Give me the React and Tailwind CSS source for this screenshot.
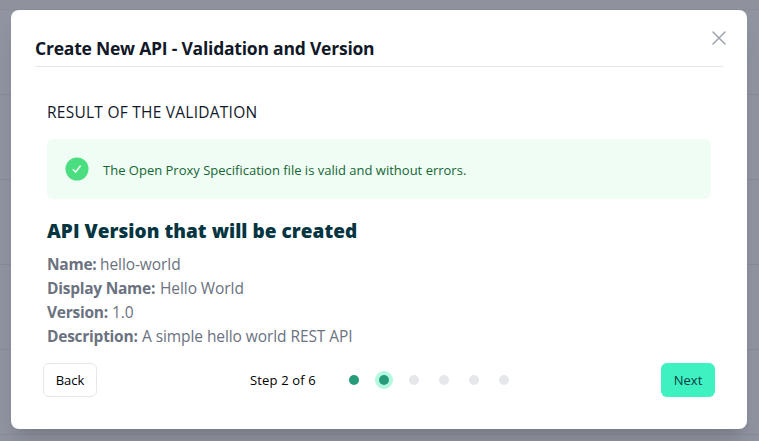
import React from "react";

const details = [
  { label: "Name:", value: "hello-world", labelWidth: "w-[53px]" },
  { label: "Display Name:", value: "Hello World", labelWidth: "w-[113px]" },
  { label: "Version:", value: "1.0", labelWidth: "w-[65px]" },
  { label: "Description:", value: "A simple hello world REST API", labelWidth: "w-[95px]" },
];

const steps = ["done", "current", "todo", "todo", "todo", "todo"];

function Step({ state }) {
  if (state === "current") {
    return (
      <li className="-mx-1 flex size-[18px] items-center justify-center rounded-full bg-[#b4f8e0]">
        <span className="size-2.5 rounded-full bg-[#259b7a]" />
      </li>
    );
  }
  return (
    <li className={state === "done" ? "size-2.5 rounded-full bg-[#259b7a]" : "size-2.5 rounded-full bg-[#e5e7eb]"} />
  );
}

function Backdrop() {
  return (
    <div className="absolute inset-0 flex flex-col bg-[#9094a0]">
      <div className="h-2.5 shrink-0 border-b border-[#8a8d99] bg-[#8f929d]" />
      {[0, 1, 2, 3, 4].map((row) => (
        <div key={row} className="h-[85px] shrink-0 border-b border-[#888c98]" />
      ))}
    </div>
  );
}

export default function App() {
  return (
    <div className="relative h-[441px] w-[759px] overflow-hidden whitespace-nowrap font-['Open_Sans','Noto_Sans',sans-serif]">
      <Backdrop />
      <div className="relative mt-2.5 ml-[11px] h-[419px] w-[736px] rounded-lg bg-white px-6 pt-6 shadow-xl">
        <button className="absolute top-4 right-4 text-[#9ca3af]" aria-label="Close">
          <svg className="size-6" viewBox="0 0 24 24" fill="none" stroke="currentColor" strokeWidth="1.5" strokeLinecap="round" strokeLinejoin="round">
            <path d="M6 18L18 6M6 6l12 12" />
          </svg>
        </button>

        <div className="h-[33px] border-b border-gray-200">
          <h3 className="text-[17.5px] leading-[29px] font-bold tracking-[-0.22px] text-[#111827]">
            Create New API - Validation and Version
          </h3>
        </div>

        <div className="px-3 pt-[33px]">
          <p className="text-[15.5px] leading-6 tracking-[0.25px] text-[#111827]">RESULT OF THE VALIDATION</p>

          <div className="mt-[15px] flex h-[60px] items-center rounded-md bg-[#effdf4] pl-[18px]">
            <svg className="size-6 shrink-0" viewBox="0 0 24 24">
              <circle cx="12" cy="12" r="11.5" fill="#4ade80" />
              <path d="M8.3 12.7l2.4 2.4 4.6-6" fill="none" stroke="#f0fdf4" strokeWidth="1.6" strokeLinecap="round" strokeLinejoin="round" />
            </svg>
            <p className="ml-[14px] pt-0.5 text-[13px] leading-5 text-[#166534]">
              The Open Proxy Specification file is valid and without errors.
            </p>
          </div>

          <h4 className="mt-[18px] text-[19px] leading-7 font-extrabold tracking-[0.04px] text-[#053541]">
            API Version that will be created
          </h4>

          <dl className="mt-[7px] text-[15.5px] leading-6 text-[#6b7280]">
            {details.map(({ label, value, labelWidth }) => (
              <div key={label} className="flex">
                <dt className={`${labelWidth} shrink-0 font-bold tracking-[-0.25px]`}>{label}</dt>
                <dd className="tracking-[-0.08px]">{value}</dd>
              </div>
            ))}
          </dl>
        </div>

        <div className="mt-[15px] flex h-[34px] items-center px-2 text-[13px]">
          <button className="h-[34px] w-[54px] rounded-md border border-gray-200 bg-white pt-0.5 text-black">Back</button>
          <div className="ml-[153px] flex items-center">
            <p className="w-[99px] pt-0.5 tracking-[0.15px] text-black">Step 2 of 6</p>
            <ol className="flex items-center gap-5">
              {steps.map((state, index) => (
                <Step key={index} state={state} />
              ))}
            </ol>
          </div>
          <button className="ml-auto h-[34px] w-[54px] rounded-md bg-[#3df2c0] pt-0.5 text-[#0a3d47]">Next</button>
        </div>
      </div>
    </div>
  );
}
